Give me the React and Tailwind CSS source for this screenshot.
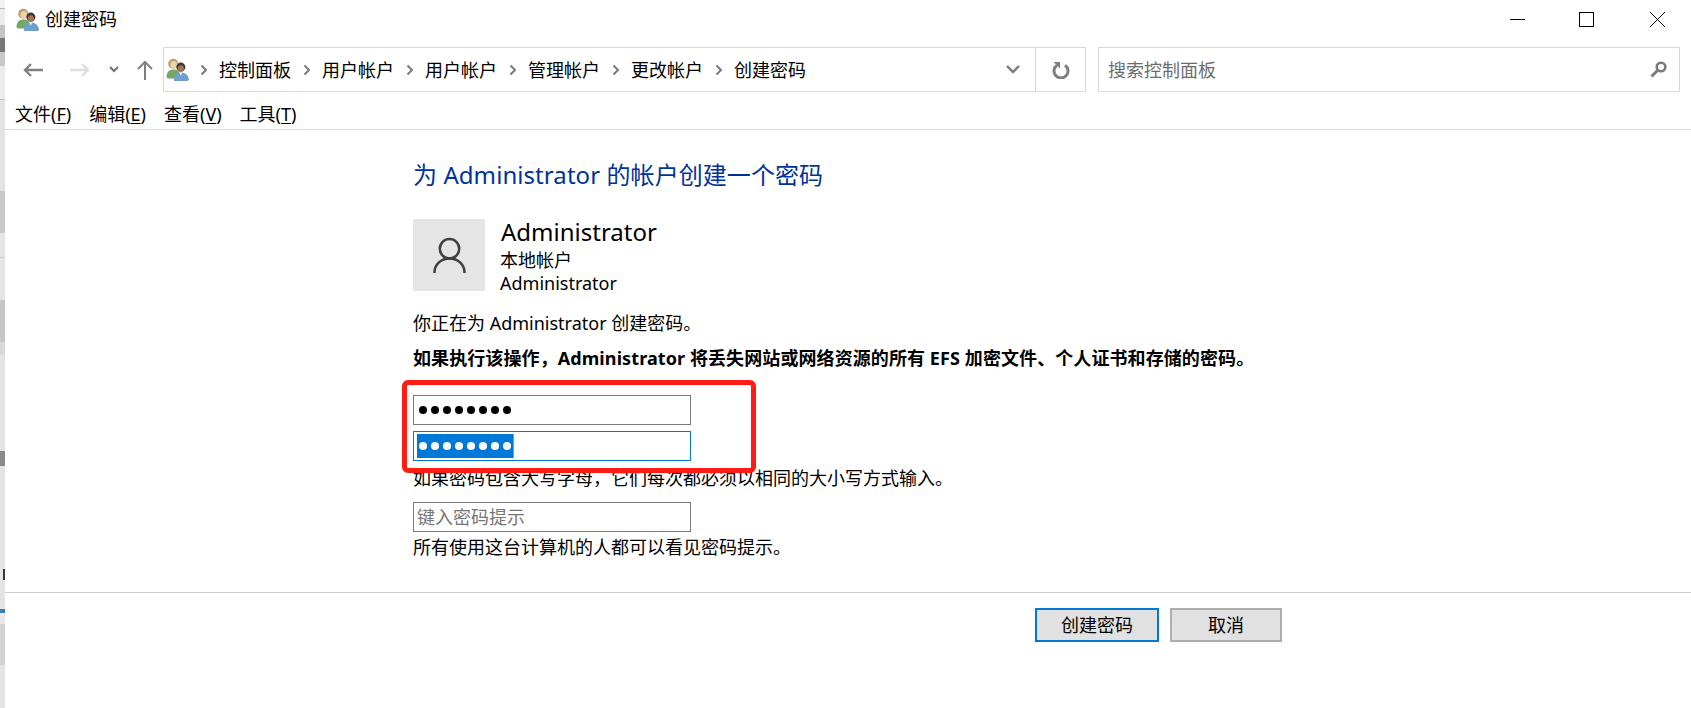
import React from 'react';

const FONT = { fontFamily: '"Noto Sans", "Noto Sans CJK SC", sans-serif' };

const crumbs = ['控制面板', '用户帐户', '用户帐户', '管理帐户', '更改帐户', '创建密码'];

// strip of the window behind this one, left edge of the picture
const strip = [
  ['h-[8px]', 'bg-[#f2f2f2]'],
  ['h-[1px]', 'bg-[#b8b8b8]'],
  ['h-[16px]', 'bg-[#ededed]'],
  ['h-[13px]', 'bg-[#c4c4c4]'],
  ['h-[14px]', 'bg-[#777777]'],
  ['h-[14px]', 'bg-[#c8c8c8]'],
  ['h-[33px]', 'bg-[#ececec]'],
  ['h-[1px]', 'bg-[#c0c0c0]'],
  ['h-[91px]', 'bg-[#e4e4e4]'],
  ['h-[42px]', 'bg-[#c8c8c8]'],
  ['h-[24px]', 'bg-[#e6e6e6]'],
  ['h-[1px]', 'bg-[#cccccc]'],
  ['h-[42px]', 'bg-[#e6e6e6]'],
  ['h-[42px]', 'bg-[#c6c6c6]'],
  ['h-[13px]', 'bg-[#d8d8d8]'],
  ['h-[96px]', 'bg-[#e4e4e4]'],
  ['h-[15px]', 'bg-[#8a8a8a]'],
  ['h-[103px]', 'bg-[#e4e4e4]'],
  ['h-[11px]', 'bg-[#e4e4e4]', 'w-[2px] bg-[#3d3530]'],
  ['h-[29px]', 'bg-[#e4e4e4]'],
  ['h-[4px]', 'bg-[#3f7fb5]'],
  ['h-[11px]', 'bg-[#e8e8e8]'],
  ['h-[41px]', 'bg-[#d2d2d2]'],
  ['h-[43px]', 'bg-[#e4e4e4]'],
];

const UsersIcon = ({ className }) => (
  <svg viewBox="0 0 24 24" className={className}>
    <circle cx="7.500" cy="6" r="5.200" fill="#bfa06a" />
    <ellipse cx="8" cy="7" rx="3.400" ry="4" fill="#ecd2ae" />
    <path d="M0.500 20c0-5 2.500-8 7-8s6.500 2 6.500 5l-2 4.500H2z" fill="#74a864" />
    <circle cx="15.500" cy="9.500" r="4.700" fill="#3a3532" />
    <ellipse cx="15.500" cy="11" rx="3.200" ry="3.500" fill="#a8744f" />
    <path d="M8.500 24c-.5-6 2-9 7-9s8 3 8.500 7.500l-1 1.500z" fill="#6f9fcf" />
    <path d="M14 15l1.500 3.500L17 15z" fill="#eef3f8" />
  </svg>
);

const Chevron = () => (
  <svg viewBox="0 0 8 12" className="w-[8px] h-[12px] shrink-0">
    <path d="M1.500 1.500L6 6l-4.500 4.500" fill="none" stroke="#7a7a7a" strokeWidth="2" />
  </svg>
);

const MenuItem = ({ label, mnemonic, className }) => (
  <span className={className}>
    {label}(<span className="underline underline-offset-2">{mnemonic}</span>)
  </span>
);

const Dots = ({ className }) => (
  <div className="flex">
    {Array.from({ length: 8 }).map((_, i) => (
      <div key={i} className="w-[12px] h-[24px] flex items-center justify-center">
        <div className={`w-[8px] h-[8px] rounded-full ${className}`}></div>
      </div>
    ))}
  </div>
);

const App = () => {
  return (
    <div className="flex w-[1691px] h-[708px] overflow-hidden bg-white text-black text-[18px]" style={FONT}>
      {/* Window behind */}
      <div className="w-[5px] shrink-0 flex flex-col">
        {strip.map(([h, bg, mark], i) => (
          <div key={i} className={`${h} ${bg} shrink-0 flex justify-end`}>
            {mark && <div className={mark}></div>}
          </div>
        ))}
      </div>

      <div className="flex-1 flex flex-col min-w-0">
        {/* Title bar */}
        <div className="h-[47px] flex items-center pl-[11px] pr-[26px]">
          <UsersIcon className="w-[23px] h-[23px] mb-[8px]" />
          <span className="ml-[6px] mb-[9px] leading-[24px]">创建密码</span>
          <div className="ml-auto flex items-center mb-[8px]">
            <div className="w-[15px] h-[1px] bg-black"></div>
            <div className="ml-[54px] w-[15px] h-[15px] border border-black"></div>
            <svg viewBox="0 0 15 15" className="ml-[56px] w-[15px] h-[15px]">
              <path d="M0 0L15 15M15 0L0 15" stroke="#000" strokeWidth="1" fill="none" />
            </svg>
          </div>
        </div>

        {/* Navigation */}
        <div className="h-[45px] flex items-center pr-[11px]">
          <svg viewBox="0 0 20 14" className="ml-[18px] w-[20px] h-[14px]">
            <path d="M20 7H2M8 1L2 7l6 6" fill="none" stroke="#7f7f7f" strokeWidth="2.400" />
          </svg>
          <svg viewBox="0 0 20 14" className="ml-[27px] w-[20px] h-[14px]">
            <path d="M0 7h18M12 1l6 6-6 6" fill="none" stroke="#dedede" strokeWidth="2.400" />
          </svg>
          <svg viewBox="0 0 10 7" className="ml-[19px] w-[10px] h-[7px]">
            <path d="M1 1l4 4 4-4" fill="none" stroke="#6f6f6f" strokeWidth="2" />
          </svg>
          <svg viewBox="0 0 16 20" className="ml-[18px] w-[16px] h-[20px]">
            <path d="M8 20V2M1 9l7-7 7 7" fill="none" stroke="#7f7f7f" strokeWidth="2" />
          </svg>
          <div className="ml-[10px] w-[923px] h-[45px] border border-[#d9d9d9] flex items-center">
            <UsersIcon className="ml-[2px] w-[23px] h-[23px]" />
            <div className="ml-[11px] flex items-center">
              {crumbs.map((c, i) => (
                <div key={i} className="flex items-center">
                  <Chevron />
                  <span className="ml-[11px] mr-[12px] leading-[24px]">{c}</span>
                </div>
              ))}
            </div>
            <svg viewBox="0 0 14 9" className="ml-auto mr-[15px] w-[14px] h-[9px]">
              <path d="M1 1l6 6 6-6" fill="none" stroke="#7a7a7a" strokeWidth="2.400" />
            </svg>
            <div className="w-[50px] h-full border-l border-[#d9d9d9] flex items-center justify-center">
              <svg viewBox="0 0 18 18" className="w-[18px] h-[18px]">
                <path d="M5 4.200a7 7 0 1 0 8 0" fill="none" stroke="#7f7f7f" strokeWidth="3" />
                <path d="M1.500 1h6.500v6.500z" fill="#7f7f7f" />
              </svg>
            </div>
          </div>
          <div className="ml-[12px] flex-1 h-[45px] border border-[#d9d9d9] flex items-center pl-[9px] pr-[12px]">
            <span className="text-[#6d6d6d] leading-[24px]">搜索控制面板</span>
            <svg viewBox="0 0 17 17" className="ml-auto w-[17px] h-[17px]">
              <circle cx="11" cy="6" r="4.300" fill="none" stroke="#7a7a7a" strokeWidth="2.600" />
              <path d="M7.500 9.500L1.500 15.500" stroke="#7a7a7a" strokeWidth="3" />
            </svg>
          </div>
        </div>

        {/* Menu */}
        <div className="h-[38px] flex items-center pt-[6px] pl-[10px] border-b border-[#d9d9d9] leading-[24px]">
          <MenuItem label="文件" mnemonic="F" />
          <MenuItem label="编辑" mnemonic="E" className="ml-[18px]" />
          <MenuItem label="查看" mnemonic="V" className="ml-[18px]" />
          <MenuItem label="工具" mnemonic="T" className="ml-[18px]" />
        </div>

        {/* Content */}
        <div className="pl-[408px]">
          <h1 className="mt-[29px] text-[24px] leading-[32px] text-[#003399] font-normal tracking-[0.07px]">为 Administrator 的帐户创建一个密码</h1>

          <div className="mt-[28px] h-[72px] flex items-start">
            <div className="w-[72px] h-[72px] bg-[#e5e5e5] flex items-center justify-center">
              <svg viewBox="0 0 34 38" className="w-[33px] h-[37px]">
                <circle cx="17" cy="12" r="10" fill="none" stroke="#404040" strokeWidth="2.600" />
                <path d="M1.500 37c0-9 7-15 15.500-15s15.500 6 15.500 15" fill="none" stroke="#404040" strokeWidth="2.600" />
              </svg>
            </div>
            <div className="ml-[16px]">
              <div className="-mt-[2px] text-[24px] leading-[30px]">Administrator</div>
              <div className="-ml-[1px] mt-[2px] leading-[23px]">本地帐户</div>
              <div className="-ml-[1px] leading-[23px]">Administrator</div>
            </div>
          </div>

          <p className="mt-[20px] leading-[24px]">你正在为 Administrator 创建密码。</p>
          <p className="mt-[11px] leading-[24px] font-bold tracking-[0.09px]">如果执行该操作，Administrator 将丢失网站或网络资源的所有 EFS 加密文件、个人证书和存储的密码。</p>

          <div className="relative mt-[25px] w-[278px]">
            <div className="h-[30px] border border-[#7a7a7a] flex items-center pl-[3px]">
              <Dots className="bg-black" />
            </div>
            <div className="mt-[6px] h-[30px] border border-[#0078d7] flex items-center pl-[3px]">
              <div className="bg-[#0078d7] border-r border-[#e08a2a]">
                <Dots className="bg-white" />
              </div>
            </div>
            {/* Red annotation drawn over the screenshot */}
            <div className="absolute left-[-11px] top-[-15px] w-[354px] h-[93px] border-[5px] border-[#ff1c14] rounded-md"></div>
          </div>

          <p className="mt-[5px] leading-[24px]">如果密码包含大写字母，它们每次都必须以相同的大小写方式输入。</p>
          <div className="mt-[12px] w-[278px] h-[30px] border border-[#7a7a7a] flex items-center pl-[3px] text-[#767676] leading-[24px]">键入密码提示</div>
          <p className="mt-[3px] leading-[24px]">所有使用这台计算机的人都可以看见密码提示。</p>
        </div>

        {/* Footer */}
        <div className="mt-[33px] border-t border-[#cccccc] pt-[15px] pl-[1030px] flex gap-[11px]">
          <button type="button" className="w-[124px] h-[34px] bg-[#e1e1e1] border-2 border-[#0078d7] leading-[24px]">创建密码</button>
          <button type="button" className="w-[112px] h-[34px] bg-[#e1e1e1] border-2 border-[#adadad] leading-[24px]">取消</button>
        </div>
      </div>
    </div>
  );
};

export default App;
